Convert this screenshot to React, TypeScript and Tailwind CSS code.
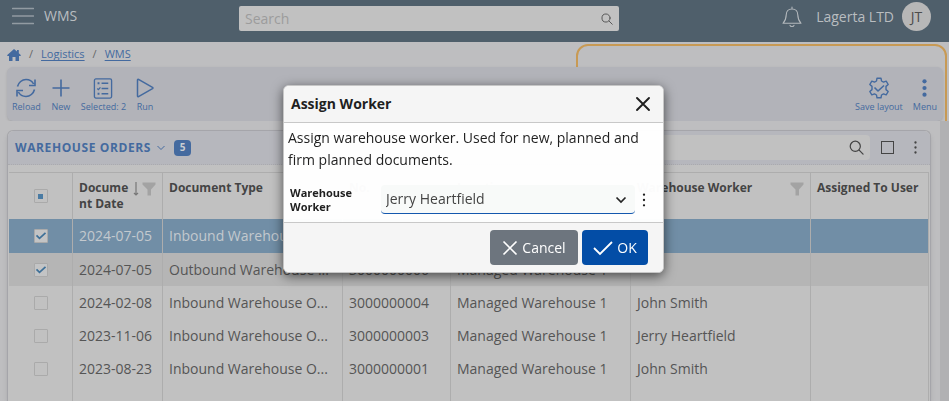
import React from "react";

const orders = [
  { date: "2024-07-05", type: "Inbound Warehouse O...", no: "3000000007", location: "Managed Warehouse 1", worker: "", checked: true },
  { date: "2024-07-05", type: "Outbound Warehouse ...", no: "3000000006", location: "Managed Warehouse 1", worker: "", checked: true },
  { date: "2024-02-08", type: "Inbound Warehouse O...", no: "3000000004", location: "Managed Warehouse 1", worker: "John Smith", checked: false },
  { date: "2023-11-06", type: "Inbound Warehouse O...", no: "3000000003", location: "Managed Warehouse 1", worker: "Jerry Heartfield", checked: false },
  { date: "2023-08-23", type: "Inbound Warehouse O...", no: "3000000001", location: "Managed Warehouse 1", worker: "John Smith", checked: false },
];

function Dots({ className, r = 1 }: { className: string; r?: number }) {
  return (
    <svg viewBox="0 0 6 18" className={className} fill="currentColor" aria-hidden="true">
      <circle cx="3" cy="3" r={r} />
      <circle cx="3" cy="9" r={r} />
      <circle cx="3" cy="15" r={r} />
    </svg>
  );
}

function Funnel() {
  return (
    <svg viewBox="0 0 14 14" className="h-3.5 w-3.5 shrink-0 text-[#a3a3a3]" fill="currentColor" aria-hidden="true">
      <path d="M0.5 0.5h13v2L9 7.5v6H5.5v-6L0.5 2.5z" />
    </svg>
  );
}

function SearchIcon({ className }: { className: string }) {
  return (
    <svg viewBox="0 0 16 16" className={className} fill="none" stroke="currentColor" strokeWidth="1.3" strokeLinecap="round" aria-hidden="true">
      <circle cx="6.7" cy="6.7" r="5.4" />
      <path d="M10.8 10.8 15 15" />
    </svg>
  );
}

function Tool({ label, children }: { label: string; children: React.ReactNode }) {
  return (
    <button type="button" className="flex flex-col items-center text-[9px] leading-[14px] whitespace-nowrap">
      <span className="flex h-6 items-center justify-center">{children}</span>
      {label}
    </button>
  );
}

function TickBox({ checked, mixed, label }: { checked?: boolean; mixed?: boolean; label: string }) {
  return (
    <span className="relative mx-auto block h-3.5 w-3.5">
      <input
        type="checkbox"
        aria-label={label}
        defaultChecked={checked}
        className="block h-3.5 w-3.5 appearance-none rounded-[1px] border border-[#aaaaaa] bg-transparent checked:bg-[#c3c4c5]"
      />
      {checked && (
        <svg viewBox="0 0 14 14" className="pointer-events-none absolute inset-0" fill="none" stroke="#3e7098" strokeWidth="1.7" aria-hidden="true">
          <path d="M2.5 6.3 5.5 9.3 11.5 3.8" />
        </svg>
      )}
      {mixed && <span className="pointer-events-none absolute inset-0 m-auto h-[5px] w-[5px] bg-[#4a7ba3]" />}
    </span>
  );
}

function Heading({ children, sorted, filter }: { children?: React.ReactNode; sorted?: boolean; filter?: boolean }) {
  return (
    <th className="border-r border-[#adadad] px-1.5 pt-[7px] text-left align-top font-bold">
      <div className="flex items-start justify-between">
        <span className="min-w-0 break-all">{children}</span>
        <span className="flex gap-0.5 pt-0.5">
          {sorted && (
            <svg viewBox="0 0 8 14" className="h-3.5 w-2" fill="none" stroke="#777777" strokeWidth="1.2" aria-hidden="true">
              <path d="M4 0v13M2 11l2 2 2-2" />
            </svg>
          )}
          {filter && <Funnel />}
        </span>
      </div>
    </th>
  );
}

function Header() {
  return (
    <header className="flex h-[42px] shrink-0 items-start bg-[#4f5f6b] text-[#b9bdc0]">
      <div className="flex w-[239px] shrink-0 items-center gap-2.5 pt-1.5 pl-3">
        <button type="button" aria-label="Navigation">
          <svg viewBox="0 0 22 18" className="h-[18px] w-[22px]" stroke="#929ba2" strokeWidth="1.3" strokeLinecap="round" aria-hidden="true">
            <path d="M0.5 1.5h21M0.5 9h21M0.5 16.5h21" />
          </svg>
        </button>
        <span className="text-sm">WMS</span>
      </div>
      <label className="mt-1.5 flex h-[25px] w-2/5 items-center rounded-[2px] bg-[#c1c1c1] px-1.5 text-[#555555]">
        <input type="text" aria-label="Search" placeholder="Search" className="min-w-0 flex-1 bg-transparent text-sm outline-none placeholder:text-[#9c9c9c]" />
        <SearchIcon className="h-3 w-3" />
      </label>
      <div className="flex flex-1 items-center justify-end gap-2 pt-0.5 pr-[18px]">
        <button type="button" aria-label="Notifications" className="mr-1.5">
          <svg viewBox="0 0 20 22" className="h-[22px] w-5" fill="none" stroke="#b4b9bd" strokeWidth="1.1" strokeLinecap="round" strokeLinejoin="round" aria-hidden="true">
            <path d="M10 1v2M10 3C6.3 3 4.2 5.5 4.2 9c0 4-1.2 6-3.2 8.3h18C17 15 15.800 13 15.800 9c0-3.500-2.100-6-5.800-6zM8 19.300c.3 1.600 3.700 1.600 4 0" />
          </svg>
        </button>
        <span className="text-sm">Lagerta LTD</span>
        <span className="flex h-[29px] w-[29px] items-center justify-center rounded-full bg-[#b7b7b7] text-sm text-[#4c4c4c]">JT</span>
      </div>
    </header>
  );
}

function Toolbar() {
  return (
    <div className="relative mr-[6px] ml-[7px] flex h-[54px] shrink-0 items-start justify-between rounded-md bg-[#b2b3b9] pt-[9px] pr-1.5 pl-[5px] text-[#446a9f] shadow-sm">
      <div className="flex gap-2.5">
        <Tool label="Reload">
          <svg viewBox="0 0 20 20" className="h-5 w-5" fill="none" stroke="currentColor" strokeWidth="1.6" aria-hidden="true">
            <path d="M1.500 8.500C2.500 4.500 6 1.500 10 1.500c3.300 0 6.200 1.800 7.600 4.500M19 1.500v6h-6M18.500 11.500c-1 4-4.500 7-8.500 7-3.300 0-6.200-1.800-7.600-4.500M1 18.500v-6h6" />
          </svg>
        </Tool>
        <Tool label="New">
          <svg viewBox="0 0 20 20" className="h-5 w-5" stroke="currentColor" strokeWidth="1.6" aria-hidden="true">
            <path d="M10 1.500v17M1.500 10h17" />
          </svg>
        </Tool>
        <Tool label="Selected: 2">
          <svg viewBox="0 0 20 22" className="h-[21px] w-5" fill="none" stroke="currentColor" strokeWidth="1.4" aria-hidden="true">
            <rect x="1" y="1" width="18" height="20" rx="1.500" />
            <path d="M8.500 5.500h7M8.500 11h7M8.500 16.500h7M4 11l1.200 1.200L7.300 9.800" />
            <path d="M4.300 5.500h2M4.300 16.500h2" strokeWidth="2" />
          </svg>
        </Tool>
        <Tool label="Run">
          <svg viewBox="0 0 18 20" className="h-5 w-[18px]" fill="none" stroke="currentColor" strokeWidth="1.5" strokeLinejoin="round" aria-hidden="true">
            <path d="M1.500 2c0-.6.5-.9 1-.6l14 8c.6.4.6.8 0 1.200l-14 8c-.5.3-1 0-1-.6z" />
          </svg>
        </Tool>
      </div>
      <div className="flex gap-2.5">
        <Tool label="Save layout">
          <svg viewBox="0 0 22 22" className="h-[22px] w-[22px]" fill="none" stroke="currentColor" strokeWidth="1.4" strokeLinejoin="round" aria-hidden="true">
            <path d="M9 1.200h4l.5 2.800 2 1.100 2.700-1 2 3.400L18 9.400v3.200l2.200 1.900-2 3.400-2.700-1-2 1.100-.5 2.800H9L8.500 18l-2-1.100-2.700 1-2-3.400L4 12.600V9.400L1.800 7.500l2-3.400 2.700 1 2-1.100z" />
            <path d="M6.500 10.500 10 14l6-5.500" strokeWidth="1.600" />
          </svg>
        </Tool>
        <Tool label="Menu">
          <Dots className="h-[20px] w-[7px]" r={1.9} />
        </Tool>
      </div>
    </div>
  );
}

function AssignDialog() {
  return (
    <div className="fixed inset-0 flex items-start justify-center pt-[85px] pr-0.5">
      <div role="dialog" aria-labelledby="dialog-title" className="w-[381px] overflow-hidden rounded-md border border-[#c6c6c6] bg-white/98 text-[#1f1f1f] shadow-[0_3px_12px_rgba(0,0,0,0.6)]">
        <div className="flex h-[37px] items-center justify-between border-b border-[#c8c8c8] bg-[#f5f5f5] pr-3 pl-[7px]">
          <h2 id="dialog-title" className="text-sm font-bold">Assign Worker</h2>
          <button type="button" aria-label="Close">
            <svg viewBox="0 0 16 16" className="h-4 w-4" stroke="currentColor" strokeWidth="1.900" strokeLinecap="round" aria-hidden="true">
              <path d="M2 2l12 12M14 2 2 14" />
            </svg>
          </button>
        </div>
        <div className="h-[100px] border-b border-[#c8c8c8] px-1 pt-1">
          <p className="text-sm leading-[22px]">Assign warehouse worker. Used for new, planned and firm planned documents.</p>
          <div className="mt-3.5 flex items-center pl-0.5">
            <label htmlFor="worker" className="w-[91px] shrink-0 text-[11px] leading-[14px] font-bold">
              Warehouse
              <br />
              Worker
            </label>
            <div className="relative flex-1">
              <select id="worker" className="block h-[29px] w-full appearance-none rounded border-b border-[#1458ae] bg-[#f8faf9] pl-[5px] text-sm text-[#444444] outline-none">
                <option>Jerry Heartfield</option>
                <option>John Smith</option>
              </select>
              <svg viewBox="0 0 12 8" className="pointer-events-none absolute top-[11px] right-2 h-2 w-3" fill="none" stroke="#252525" strokeWidth="1.700" aria-hidden="true">
                <path d="M1.500 1.500 6 6l4.500-4.500" />
              </svg>
            </div>
            <button type="button" aria-label="Worker options" className="mr-3 ml-1.5">
              <Dots className="h-4 w-[6px]" r={1.3} />
            </button>
          </div>
        </div>
        <div className="flex h-[49px] items-center justify-end gap-1 bg-[#f5f5f5]/98 pr-[15px] text-sm text-white">
          <button type="button" className="flex h-[35px] w-[88px] items-center justify-center gap-1 rounded bg-[#6d757e]">
            <svg viewBox="0 0 16 16" className="h-4 w-4" stroke="currentColor" strokeWidth="1.700" aria-hidden="true">
              <path d="M1.500 1.500l13 13M14.500 1.500l-13 13" />
            </svg>
            Cancel
          </button>
          <button type="button" className="flex h-[35px] w-[66px] items-center justify-center gap-1 rounded bg-[#034da6]">
            <svg viewBox="0 0 20 16" className="h-4 w-5" fill="none" stroke="currentColor" strokeWidth="1.800" aria-hidden="true">
              <path d="M1 8l6 6L19 2" />
            </svg>
            OK
          </button>
        </div>
      </div>
    </div>
  );
}

export default function App() {
  return (
    <div className="relative flex h-screen flex-col overflow-hidden bg-[#bebec0] font-['Open_Sans','Noto_Sans',sans-serif]">
      <Header />
      <div className="pointer-events-none absolute top-11 right-0.5 h-[90px] w-[371px] rounded-xl border-2 border-[#c89a54]" />
      <nav aria-label="Breadcrumb" className="flex h-[25px] shrink-0 items-center gap-2 pl-[7px] text-[11px] text-[#446a9f]">
        <a href="#home" aria-label="Home">
          <svg viewBox="0 0 14 12" className="h-3 w-3.5" fill="currentColor" aria-hidden="true">
            <path d="M7 0 10 2.600V1h1.800v3.200L14 6.300l-.7.7H12v5H8.500V8h-3v4H2V7H.7L0 6.300z" />
          </svg>
        </a>
        <span className="text-[#666666]">/</span>
        <a href="#logistics" className="underline underline-offset-2">Logistics</a>
        <span className="text-[#666666]">/</span>
        <a href="#wms" className="underline underline-offset-2">WMS</a>
      </nav>
      <Toolbar />
      <main className="relative flex min-h-0 flex-1 bg-[#bebec0] pl-[7px]">
        <section className="mt-[9px] mr-[9px] flex min-w-0 flex-1 flex-col rounded-t-md border border-b-0 border-[#a5a5aa] bg-[#c1c1c1] shadow-md">
          <div className="flex h-[34px] shrink-0 items-center rounded-t-md border-b border-dotted border-[#aaaaae] bg-[#b6b7bd] pr-3 pl-[7px]">
            <h1 className="text-xs font-bold tracking-wider text-[#446a9f]">WAREHOUSE ORDERS</h1>
            <svg viewBox="0 0 8 6" className="mr-[9px] ml-1.5 h-1.5 w-2" fill="none" stroke="#446a9f" strokeWidth="1" aria-hidden="true">
              <path d="M.5 1 4 4.500 7.500 1" />
            </svg>
            <span className="flex h-4 w-[17px] items-center justify-center rounded bg-[#446a9f] text-[10px] font-bold text-[#c9cdd2]">5</span>
            <label className="ml-auto flex h-[25px] w-1/2 items-center rounded-sm bg-[#c1c1c1] px-1.5 text-[#444444]">
              <input type="text" aria-label="Search orders" className="min-w-0 flex-1 bg-transparent outline-none" />
              <SearchIcon className="h-[15px] w-[15px]" />
            </label>
            <button type="button" aria-label="Maximize" className="ml-[11px] h-[13px] w-[13px] border border-[#444444]" />
            <button type="button" aria-label="More" className="ml-[19px] text-[#444444]">
              <Dots className="h-[15px] w-[5px]" r={1.4} />
            </button>
          </div>
          <table className="mt-[7px] mr-px ml-px h-full table-fixed border-separate border-spacing-0 border-t border-[#adadad] text-sm text-[#555555]">
            <colgroup>
              <col className="w-[64px]" />
              <col className="w-[90px]" />
              <col className="w-[180px]" />
              <col className="w-[108px]" />
              <col className="w-[180px]" />
              <col className="w-[180px]" />
              <col />
            </colgroup>
            <thead>
              <tr className="h-[46px] text-xs leading-4 text-[#444444]">
                <th className="border-r border-[#adadad] align-middle">
                  <TickBox mixed label="Select all" />
                </th>
                <Heading sorted filter>Docume<wbr />nt Date</Heading>
                <Heading>Document Type</Heading>
                <Heading>No.</Heading>
                <Heading>Location</Heading>
                <Heading filter>Warehouse Worker</Heading>
                <Heading>Assigned To User</Heading>
              </tr>
            </thead>
            <tbody>
              {orders.map((o, i) => (
                <tr key={o.no} className={i === 0 ? "h-[34px] bg-[#718ea6] text-[#c3c9ce]" : i === 1 ? "h-[33px] bg-[#b5b5b5]" : "h-[33px]"}>
                  <td className="border-r border-[#adadad]">
                    <TickBox checked={o.checked} label={"Select order " + o.no} />
                  </td>
                  {[o.date, o.type, o.no, o.location, o.worker, ""].map((v, j) => (
                    <td key={j} className="overflow-hidden border-r border-[#adadad] px-1.5 whitespace-nowrap">{v}</td>
                  ))}
                </tr>
              ))}
              <tr aria-hidden="true">
                {[0, 1, 2, 3, 4, 5, 6].map((j) => (
                  <td key={j} className="border-r border-[#adadad]" />
                ))}
              </tr>
            </tbody>
          </table>
        </section>
        <div className="w-[9px] shrink-0 bg-[#b1b1b3]" />
      </main>
      <AssignDialog />
    </div>
  );
}
